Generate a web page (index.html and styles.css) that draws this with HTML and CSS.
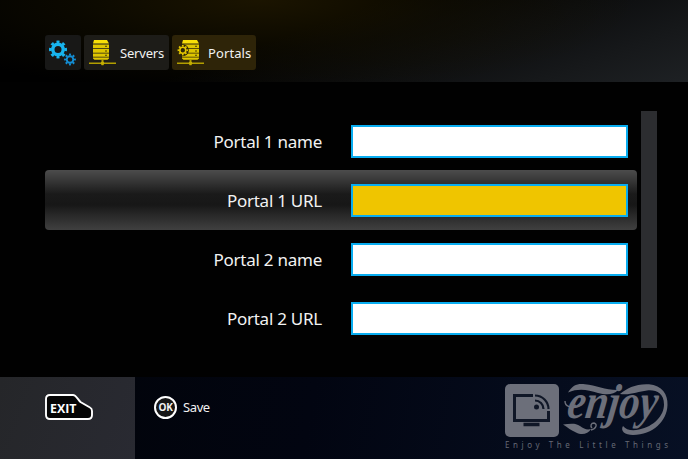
FILE: index.html
```html
<!DOCTYPE html>
<html lang="en">
<head>
<meta charset="utf-8">
<title>Portals</title>
<link rel="stylesheet" href="styles.css">
</head>
<body>
<header class="top">
  <nav class="crumbs">
    <a class="crumb crumb-home">
      <svg class="gears" viewBox="0 0 28 28">
        <g fill="none" stroke="#18b4ee">
          <circle cx="10" cy="10.5" r="5.2" stroke-width="3.4"/>
          <circle cx="10" cy="10.5" r="7.6" stroke-width="2.8" pathLength="16" stroke-dasharray="1 1" stroke-dashoffset=".5"/>
        </g>
        <g fill="none" stroke="#148fd6">
          <circle cx="22" cy="20.5" r="3.3" stroke-width="1.9"/>
          <circle cx="22" cy="20.5" r="4.9" stroke-width="2" pathLength="16" stroke-dasharray="1 1" stroke-dashoffset=".5"/>
        </g>
      </svg>
    </a>
    <a class="crumb crumb-servers">
      <svg class="rack" viewBox="0 0 27 26">
        <path fill="#f7df08" d="M5 0h13l2 3.600H4z"/>
        <path fill="#dfc600" d="M4 4.400h16v3.800H4zM4 9h16v3.800H4zM4 13.600h16v3.200H4zM4 17.500h16v1l-1.500 1.300h-13L4 18.500z"/>
        <path fill="#4a4100" d="M16 5.800h2v1h-2zM16 10.400h2v1h-2zM16 14.800h2v1h-2z"/>
        <path fill="#b29e00" d="M0 22.500h27v1.400H0zM12.500 20h2v5.300h-2z"/>
        <circle cx="13.500" cy="23.300" r="1.800" fill="#c4ae00"/>
      </svg>
      <span>Servers</span>
    </a>
    <a class="crumb crumb-portals">
      <svg class="rack" viewBox="0 0 27 26">
        <path fill="#f7df08" d="M6 0h14l2 3.600H5z"/>
        <path fill="#dfc600" d="M5 4.400h17v3.800H5zM5 9h17v3.800H5zM5 13.600h17v3.200H5zM5 17.500h17v1l-1.500 1.300h-14L5 18.500z"/>
        <path fill="#4a4100" d="M18 5.800h2v1h-2zM18 10.400h2v1h-2zM18 14.800h2v1h-2z"/>
        <circle cx="5.800" cy="10.200" r="6" fill="#2e2708"/>
        <g fill="none" stroke="#e6c800">
          <circle cx="5.800" cy="10.200" r="3" stroke-width="1.600"/>
          <circle cx="5.800" cy="10.200" r="4.400" stroke-width="1.600" pathLength="16" stroke-dasharray="1 1" stroke-dashoffset=".5"/>
        </g>
        <path fill="#b29e00" d="M0 22.500h27v1.400H0zM12.500 20h2v5.300h-2z"/>
        <circle cx="13.500" cy="23.300" r="1.800" fill="#c4ae00"/>
      </svg>
      <span>Portals</span>
    </a>
  </nav>
</header>
<main class="content">
  <form class="rows">
    <label class="row"><span class="label">Portal 1 name</span><input class="field" type="text"></label>
    <label class="row row-active"><span class="label">Portal 1 URL</span><input class="field" type="text"></label>
    <label class="row"><span class="label">Portal 2 name</span><input class="field" type="text"></label>
    <label class="row"><span class="label">Portal 2 URL</span><input class="field" type="text"></label>
  </form>
  <div class="scrollbar"></div>
</main>
<footer class="bottom">
  <div class="exit">
    <svg class="exit-key" viewBox="0 0 48 26">
      <path d="M5 1h23c3 0 4.500 4 7.500 7l9.500 5.500q2 1 2 3.500v4q0 4-4 4H5q-4 0-4-4V5q0-4 4-4z" fill="#050505" stroke="#fff" stroke-width="1.900"/>
      <text class="exit-text" x="5" y="18.500" textLength="26.500" lengthAdjust="spacingAndGlyphs">EXIT</text>
    </svg>
  </div>
  <div class="actions">
    <span class="ok">OK</span>
    <span class="save">Save</span>
  </div>
  <div class="brand">
    <svg class="brand-logo" viewBox="0 0 164 54">
      <rect width="54" height="53" rx="5" fill="#6c6f7a"/>
      <g fill="none" stroke="#101727" stroke-width="3">
        <path d="M28 11.500H9.500v25h34V27"/>
        <path d="M18.500 40.500h16" stroke-width="3.500"/>
        <path d="M30 16.500a8.500 8.500 0 0 1 8.500 8.500M30 11.500A13.500 13.500 0 0 1 43.500 25" stroke-width="2.200"/>
      </g>
      <circle cx="31.500" cy="23" r="2.500" fill="#101727"/>
      <text class="wordmark" transform="translate(61 33.500) skewX(-8)" x="0" y="0" textLength="90" lengthAdjust="spacingAndGlyphs">enjoy</text>
      <g fill="#6c6f7a">
        <path d="M63 8.500C68 1 72-.5 80 .3c11 1 21 6 33 5.700-4 5-12 5-20 3-10-3-19-5-30-.5z"/>
        <path d="M115 10C122 4 131-.5 144 .2c13 1 19 10 18.500 20.800C162 37 148 51 128 51c-8 0-13-4-10-9 3 4 9 5 16 3.500 15-3 25-14 25-25C159 9 151 5.500 142 6.500c-9 1-17 5-27 3.500z"/>
        <path d="M58 40.500c6-.5 12-2 17 1.500 4 3 7 4 11 3-3 5-9 6.500-15 3.500-5-2-8-5-13-8z"/>
      </g>
      <path d="M86 46c5-1 7-6 3-7-3 0-4 3-2 5M60 17c0 6 6 7 11 4" fill="none" stroke="#6c6f7a" stroke-width="1.400"/>
    </svg>
    <svg class="tagline" viewBox="0 0 164 12">
      <text x="0" y="8.500" textLength="163">Enjoy The Little Things</text>
    </svg>
  </div>
</footer>
</body>
</html>
```
FILE: styles.css
```css
* { box-sizing: border-box; }
body {
  margin: 0;
  width: 688px;
  height: 459px;
  display: flex;
  flex-direction: column;
  overflow: hidden;
  background: #010101;
  color: #f2f2f2;
  font-family: "Noto Sans", "Open Sans", sans-serif;
}
.top {
  height: 82px;
  padding: 35px 45px 0;
  background:
    radial-gradient(ellipse 380px 95px at 260px 0, rgba(36, 27, 0, .75), rgba(24, 19, 0, .45) 50%, transparent),
    linear-gradient(160deg, #000 42%, #0c0d0e 64%, #16181a 83%, #1e2124);
}
.crumbs { display: flex; gap: 3px; }
.crumb {
  height: 35px;
  display: flex;
  align-items: center;
  border-radius: 3px;
  background: #1d1c18;
  font-size: 13px;
  white-space: nowrap;
}
.crumb-home { width: 36px; padding: 0 3px; background: #181817; }
.crumb-servers { width: 85px; padding-left: 5px; gap: 4px; }
.crumb-portals { width: 84px; padding-left: 5px; gap: 4px; background: #2e2408; }
.crumb span { letter-spacing: -.2px; padding-top: 1px; }
.crumb-portals span { letter-spacing: .1px; }
.gears { width: 28px; height: 28px; }
.rack { width: 27px; height: 26px; flex: none; }
.content {
  height: 295px;
  padding: 29px 31px 29px 45px;
  display: flex;
  gap: 4px;
}
.rows { width: 592px; margin: 0; display: grid; grid-template-rows: repeat(4, 1fr); }
.row {
  display: grid;
  grid-template-columns: 277px 277px;
  column-gap: 29px;
  align-items: center;
  padding-top: 1px;
  border-radius: 4px;
}
.row-active { background: linear-gradient(#4c4c4c, #343434 20%, #1a1a1a 40%, #171717 58%, #292929 76%, #404040); }
.label { padding-top: 1px; text-align: right; font-size: 17px; line-height: 24px; letter-spacing: -.25px; }
.field {
  width: 277px;
  height: 33px;
  padding: 0 5px;
  border: 2px solid #08adf0;
  border-radius: 0;
  background: #fff;
  outline: none;
}
.row-active .field { background: #efc500; }
.scrollbar { width: 16px; background: #2c2d30; }
.bottom { height: 82px; display: flex; background: linear-gradient(100deg, #010308, #020511 45%, #071024); }
.exit { width: 135px; padding: 17px 0 0 45px; background: linear-gradient(110deg, #252629, #292a32); }
.exit-key { display: block; width: 48px; height: 26px; }
.exit-text { font: bold 11.5px "Open Sans", sans-serif; fill: #fff; }
.actions { flex: 1; height: 60px; padding-left: 19px; display: flex; align-items: center; gap: 6px; }
.ok {
  width: 23px;
  height: 23px;
  border: 2px solid #fff;
  border-radius: 50%;
  background: #161616;
  font: bold 10px/19px "Open Sans", sans-serif;
  text-align: center;
  letter-spacing: -.3px;
}
.save { font-size: 13px; letter-spacing: -.4px; }
.brand { width: 183px; padding-top: 7px; display: flex; flex-direction: column; }
.brand-logo { width: 164px; height: 54px; overflow: visible; }
.wordmark { font: italic bold 49px "Liberation Serif", serif; fill: #6c6f7a; }
.tagline { width: 164px; height: 12px; margin-top: 1px; font-size: 8px; fill: #656975; }
```
